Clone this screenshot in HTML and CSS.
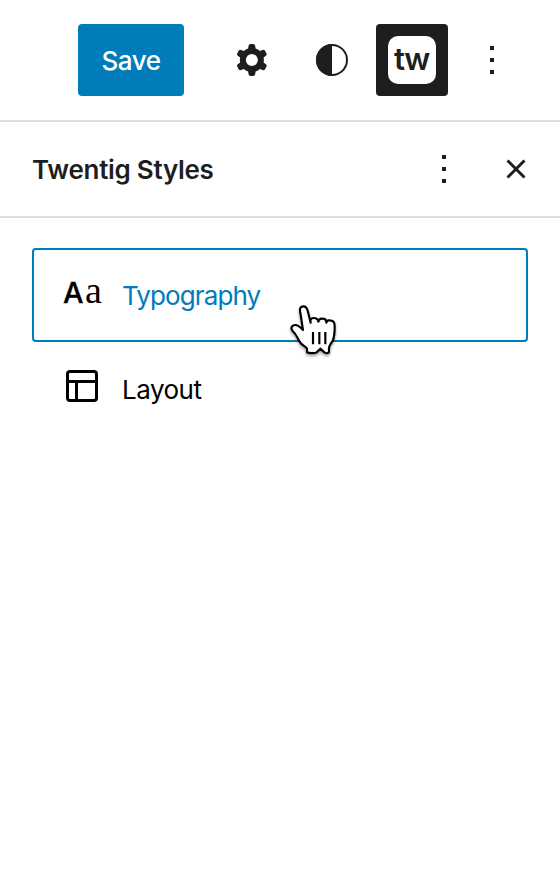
FILE: index.html
```html
<!DOCTYPE html>
<html lang="en">
<head>
<meta charset="utf-8">
<title>Twentig Styles</title>
<link rel="stylesheet" href="styles.css">
</head>
<body>
<header class="toolbar">
  <button class="save"><span>Save</span></button>
  <button class="icon-button settings" aria-label="Settings">
    <svg width="48" height="48" viewBox="0 0 24 24"><path fill-rule="evenodd" d="M10.289 4.836A1 1 0 0111.275 4h1.306a1 1 0 01.987.836l.244 1.466c.787.26 1.503.679 2.108 1.218l1.393-.522a1 1 0 011.216.437l.653 1.13a1 1 0 01-.23 1.273l-1.148.944a6.025 6.025 0 010 2.435l1.149.946a1 1 0 01.23 1.272l-.653 1.13a1 1 0 01-1.216.437l-1.394-.522c-.605.54-1.32.958-2.108 1.218l-.244 1.466a1 1 0 01-.987.836h-1.306a1 1 0 01-.986-.836l-.244-1.466a5.995 5.995 0 01-2.108-1.218l-1.394.522a1 1 0 01-1.217-.436l-.653-1.131a1 1 0 01.23-1.272l1.149-.946a6.026 6.026 0 010-2.435l-1.148-.944a1 1 0 01-.23-1.272l.653-1.131a1 1 0 011.217-.437l1.393.522a5.994 5.994 0 012.108-1.218l.244-1.466zM14.929 12a3 3 0 11-6 0 3 3 0 016 0z"/></svg>
  </button>
  <button class="icon-button" aria-label="Styles">
    <svg width="48" height="48" viewBox="0 0 48 48"><circle cx="24" cy="24" r="15" fill="none" stroke="#1e1e1e" stroke-width="2"/><path d="M24 8a16 16 0 0 0 0 32z"/></svg>
  </button>
  <button class="brand"><span class="brand-tile"><span class="brand-name">tw</span></span></button>
  <button class="icon-button more" aria-label="Options">
    <svg width="48" height="48" viewBox="0 0 24 24"><path d="M13 19h-2v-2h2v2zm0-6h-2v-2h2v2zm0-6h-2V5h2v2z"/></svg>
  </button>
</header>
<section class="panel-header">
  <h2>Twentig Styles</h2>
  <button class="icon-button" aria-label="More">
    <svg width="48" height="48" viewBox="0 0 24 24"><path d="M13 19h-2v-2h2v2zm0-6h-2v-2h2v2zm0-6h-2V5h2v2z"/></svg>
  </button>
  <button class="icon-button close" aria-label="Close">
    <svg width="48" height="48" viewBox="0 0 48 48"><path d="M15.5 15.5l17 17m0-17l-17 17" fill="none" stroke="#1e1e1e" stroke-width="3"/></svg>
  </button>
</section>
<nav class="menu">
  <a class="item active">
    <span class="type-icon"><span class="sans">A</span><span class="serif">a</span></span>
    <span class="label typography">Typography</span>
    <svg class="pointer" width="70" height="70" viewBox="0 0 210 210">
      <path d="M69 105L61 53C58 39 62 34 70 34C77 34 81 39 83 47L92 83C90 73 93 69 101 69C110 69 114 72 115 80C117 71 122 70 128 71C136 71 139 75 139 83C141 75 148 75 154 77C163 79 164 85 164 97C164 116 163 127 158 137C152 148 147 151 147 160L147 172C143 175 136 175 133 172L121 161L110 172C105 175 87 175 81 172L81 161C76 154 66 151 61 143C52 130 51 120 38 108C30 99 36 91 45 90C54 89 63 99 69 105Z" fill="#fff" stroke="#000" stroke-width="6.5" stroke-linejoin="round"/>
      <path d="M99 111v37M118 111v37M136 111v37" stroke="#000" stroke-width="6.5" fill="none"/>
    </svg>
  </a>
  <a class="item">
    <svg class="layout-icon" width="32" height="32" viewBox="0 0 32 32"><rect x="1.5" y="1.5" width="29" height="29" rx="2.5"/><path d="M1.5 11.5h29M10.5 11.5v19"/></svg>
    <span class="label layout">Layout</span>
  </a>
</nav>
</body>
</html>
```
FILE: styles.css
```css
* { box-sizing: border-box; }
body {
  margin: 0;
  min-height: 884px;
  background: #fff;
  color: #1e1e1e;
  font-family: Inter, "Liberation Sans", sans-serif;
  font-size: 26px;
}
button {
  padding: 0;
  border: 0;
  background: none;
  color: inherit;
  font: inherit;
}
svg { display: block; fill: #1e1e1e; }
.toolbar {
  display: flex;
  align-items: center;
  height: 122px;
  padding-left: 78px;
  border-bottom: 2px solid #ddd;
}
.save {
  width: 106px;
  height: 72px;
  border-radius: 4px;
  background: #007cba;
  color: #fff;
  font-weight: 500;
  letter-spacing: -.5px;
  line-height: 72px;
  padding-top: 1px;
}
.icon-button { width: 48px; height: 48px; flex: none; }
.settings { margin: 0 32px 0 44px; }
.brand {
  display: flex;
  align-items: center;
  justify-content: center;
  width: 72px;
  height: 72px;
  margin: 0 20px;
  border-radius: 4px;
  background: #1e1e1e;
}
.brand-tile {
  display: flex;
  justify-content: center;
  width: 48px;
  height: 48px;
  border-radius: 10px;
  background: #fff;
}
.brand-name {
  font-size: 31px;
  line-height: 46px;
  font-weight: 600;
  letter-spacing: -1.2px;
  padding-right: 1px;
}
.panel-header {
  display: flex;
  align-items: center;
  height: 96px;
  padding: 0 20px 0 32px;
  border-bottom: 2px solid #ddd;
}
.panel-header h2 {
  flex: 1;
  margin: 0;
  padding-top: 1px;
  font-size: 26px;
  font-weight: 600;
  letter-spacing: -.28px;
}
.close { margin-left: 24px; }
.menu { padding: 30px 32px; }
.item {
  position: relative;
  display: flex;
  align-items: center;
  height: 94px;
  padding-left: 30px;
  border: 2px solid transparent;
  border-radius: 4px;
  color: #000;
}
.active { border-color: #007cba; color: #007cba; }
.type-icon {
  display: flex;
  align-items: baseline;
  width: 58px;
  height: 40px;
  margin-bottom: 10px;
  color: #000;
  line-height: 40px;
}
.sans { width: 22px; margin-left: -1px; font-size: 29px; font-weight: 500; -webkit-text-stroke: .3px #000; }
.serif { font-family: "Liberation Serif", serif; font-size: 38px; }
.layout-icon { margin: 0 24px 6px 2px; fill: none; stroke: #000; stroke-width: 3; }
.label { padding-top: 1px; }
.typography { letter-spacing: -.88px; }
.layout { letter-spacing: -.5px; }
.pointer {
  position: absolute;
  left: 246px;
  top: 45px;
  overflow: visible;
  filter: drop-shadow(0 2px 1.5px rgba(0, 0, 0, .35));
}
```
